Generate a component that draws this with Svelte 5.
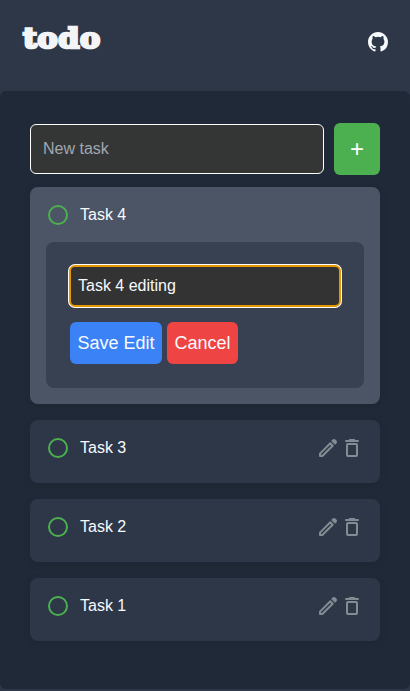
<script>
  const activeTask = 'Task 4';
  const tasks = ['Task 3', 'Task 2', 'Task 1'];
  let newTask = $state('');
  let draft = $state('Task 4 editing');
</script>

<div class="app">
  <header>
    <h1>todo</h1>
    <svg class="github" viewBox="0 0 16 16" aria-label="GitHub">
      <path d="M8 0C3.58 0 0 3.58 0 8c0 3.54 2.29 6.53 5.47 7.59.4.07.55-.17.55-.38 0-.19-.01-.82-.01-1.49-2.01.37-2.53-.49-2.69-.94-.09-.23-.48-.94-.82-1.13-.28-.15-.68-.52-.01-.53.63-.01 1.08.58 1.23.82.72 1.21 1.87.87 2.33.66.07-.52.28-.87.51-1.07-1.78-.2-3.64-.89-3.64-3.95 0-.87.31-1.59.82-2.15-.08-.2-.36-1.02.08-2.12 0 0 .67-.21 2.2.82a7.6 7.6 0 0 1 4 0c1.53-1.04 2.2-.82 2.2-.82.44 1.1.16 1.92.08 2.12.51.56.82 1.27.82 2.15 0 3.07-1.87 3.75-3.65 3.95.29.25.54.73.54 1.48 0 1.07-.01 1.93-.01 2.2 0 .21.15.46.55.38A8 8 0 0 0 16 8c0-4.42-3.58-8-8-8z" />
    </svg>
  </header>

  <main>
    <div class="add">
      <input class="new" placeholder="New task" bind:value={newTask} />
      <button class="plus">+</button>
    </div>

    <ul>
      <li class="active">
        <div class="row">
          <span class="check"></span>
          <span class="name">{activeTask}</span>
        </div>
        <div class="editor">
          <input class="edit" bind:value={draft} />
          <div class="buttons">
            <button class="save">Save Edit</button>
            <button class="cancel">Cancel</button>
          </div>
        </div>
      </li>
      {#each tasks as task}
        <li>
          <div class="row">
            <span class="check"></span>
            <span class="name">{task}</span>
            <div class="icons">
              <svg viewBox="0 0 24 24">
                <path class="line" d="M4 20v-2.4L14.3 7.3l2.4 2.4L6.4 20z" />
                <path d="M15.2 5l1.4-1.4q.6-.6 1.4-.6t1.4.6l1 1q.6.6.6 1.4t-.6 1.4L19 8.8z" />
              </svg>
              <svg viewBox="0 0 24 24">
                <rect class="line" x="7" y="8" width="10" height="12" rx="1" />
                <path d="M9.5 3h5l1 1H18q1 0 1 1t-1 1H6q-1 0-1-1t1-1h2.500z" />
              </svg>
            </div>
          </div>
        </li>
      {/each}
    </ul>
  </main>
</div>

<style>
  :global(body) {
    margin: 0;
    background: #2d3748;
  }
  .app {
    box-sizing: border-box;
    height: 691px;
    overflow: hidden;
    background: #2d3748;
    color: #f7fafc;
    font: 16px/24px "Liberation Sans", Arial, sans-serif;
  }
  header {
    box-sizing: border-box;
    height: 91px;
    padding: 17px 22px 0 23px;
    display: flex;
    justify-content: space-between;
    align-items: flex-start;
  }
  h1 {
    margin: 0;
    color: #f3f4f6;
    font: bold 27px/44px "DejaVu Serif", serif;
    letter-spacing: 0.5px;
    -webkit-text-stroke: 2.5px #f3f4f6;
    transform: scaleX(1.12);
    transform-origin: left;
  }
  .github {
    width: 20px;
    height: 20px;
    margin-top: 15px;
    fill: #f7fafc;
  }
  main {
    box-sizing: border-box;
    height: 598px;
    padding: 32px 30px 0;
    border-radius: 6px;
    background: #202937;
  }
  .add {
    display: flex;
    align-items: center;
    gap: 10px;
    height: 52px;
  }
  input,
  button {
    box-sizing: border-box;
    margin: 0;
    font-family: inherit;
    outline: none;
  }
  input {
    color: #f7fafc;
    background: #333;
    font-size: 16px;
  }
  input::placeholder {
    color: #a0a8b2;
    opacity: 1;
  }
  .new {
    flex: 1;
    min-width: 0;
    height: 50px;
    padding: 0 12px;
    border: 1px solid #fff;
    border-radius: 6px;
    background: #343635;
  }
  button {
    border: 0;
    border-radius: 6px;
    color: #f7fafc;
    padding: 0;
  }
  .plus {
    width: 46px;
    height: 52px;
    color: #fff;
    background: #4caf50;
    font-size: 24px;
  }
  ul {
    list-style: none;
    margin: 12px 0 0;
    padding: 0;
    display: flex;
    flex-direction: column;
    gap: 16px;
  }
  li {
    box-sizing: border-box;
    height: 63px;
    padding: 16px;
    border-radius: 8px;
    background: #2d3748;
    box-shadow: 0 2px 10px rgba(0, 0, 0, 0.07);
  }
  .active {
    height: 217px;
    background: #4c5566;
  }
  .row {
    display: flex;
    align-items: center;
    height: 24px;
  }
  .check {
    box-sizing: border-box;
    width: 20px;
    height: 20px;
    margin: 0 12px 0 2px;
    border: 2px solid #4caf50;
    border-radius: 50%;
  }
  .name {
    flex: 1;
  }
  .icons {
    display: flex;
  }
  .icons svg {
    width: 24px;
    height: 24px;
    fill: #838b93;
  }
  .icons .line {
    fill: none;
    stroke: #838b93;
    stroke-width: 2;
    stroke-linejoin: round;
  }
  .editor {
    box-sizing: border-box;
    height: 146px;
    margin-top: 15px;
    padding: 23px 23px 0;
    border-radius: 8px;
    background: #384151;
  }
  .edit {
    display: block;
    width: 272px;
    height: 42px;
    padding: 0 7px;
    border: 2px solid #e59700;
    border-radius: 6px;
    box-shadow: 0 0 0 1px #fff;
  }
  .buttons {
    display: flex;
    gap: 5px;
    margin: 15px 0 0 1px;
  }
  .buttons button {
    height: 42px;
    font-size: 18px;
  }
  .save {
    width: 92px;
    background: #3b82f6;
  }
  .cancel {
    width: 71px;
    background: #ef4444;
  }
</style>
